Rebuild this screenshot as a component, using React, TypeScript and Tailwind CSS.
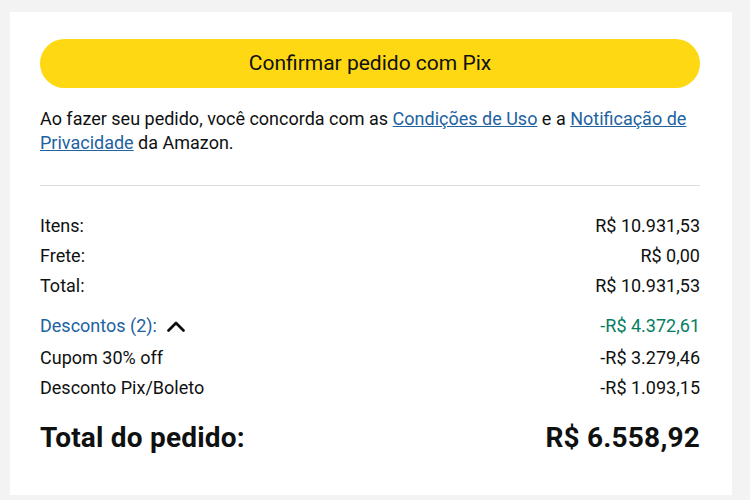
import React from "react";

const rows = [
  { label: "Itens:", value: "R$ 10.931,53" },
  { label: "Frete:", value: "R$ 0,00" },
  { label: "Total:", value: "R$ 10.931,53" },
];

export default function App() {
  return (
    <div
      className="min-h-screen w-[750px] h-[500px] bg-[#f3f3f3] pt-[12px] pl-[10px] text-[#0F1111]"
      style={{ fontFamily: "Roboto, 'Noto Sans', sans-serif" }}
    >
      <div className="w-[722px] h-[483px] bg-white pl-[30px] pr-[32px] pt-[27px]">
        <button className="w-full h-[49px] rounded-full bg-[#FFD814] text-[21px] text-[#0F1111] flex items-center justify-center">
          Confirmar pedido com Pix
        </button>
        <p className="mt-[19px] text-[18px] leading-[24px] text-[#0F1111]">
          Ao fazer seu pedido, você concorda com as{" "}
          <a className="text-[#2162A1] underline">Condições de Uso</a> e a{" "}
          <a className="text-[#2162A1] underline">Notificação de Privacidade</a> da Amazon.
        </p>
        <div className="mt-[30px] border-t border-[#dddddd]" />
        <div className="mt-[25px] flex flex-col text-[18px] leading-[30px]">
          {rows.map((r) => (
            <div key={r.label} className="flex justify-between">
              <span>{r.label}</span>
              <span>{r.value}</span>
            </div>
          ))}
          <div className="mt-[10px] flex justify-between">
            <span className="flex items-center gap-[9px] text-[#2162A1]">
              Descontos (2):
              <svg width="20" height="13" viewBox="0 0 20 13" fill="none">
                <path d="M2.5 10.5 L10 3 L17.5 10.5" stroke="#0F1111" strokeWidth="2.8" strokeLinecap="round" strokeLinejoin="round" />
              </svg>
            </span>
            <span className="text-[#067D62]">-R$ 4.372,61</span>
          </div>
          <div className="mt-[2px] flex justify-between">
            <span>Cupom 30% off</span>
            <span>-R$ 3.279,46</span>
          </div>
          <div className="flex justify-between">
            <span>Desconto Pix/Boleto</span>
            <span>-R$ 1.093,15</span>
          </div>
        </div>
        <div className="mt-[19px] flex justify-between text-[28px] font-bold leading-[32px] tracking-[0.2px]">
          <span>Total do pedido:</span>
          <span>R$ 6.558,92</span>
        </div>
      </div>
    </div>
  );
}
